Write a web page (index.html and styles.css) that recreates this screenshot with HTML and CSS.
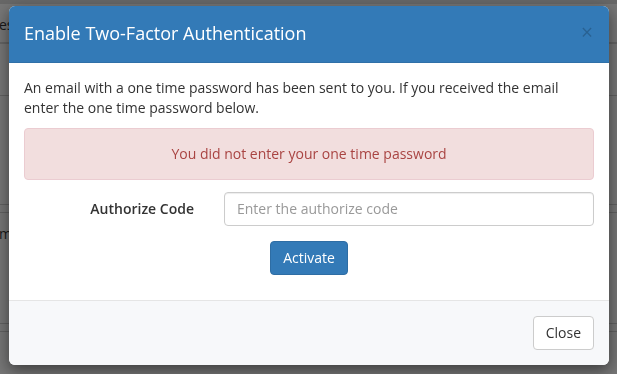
FILE: index.html
```html
<!DOCTYPE html>
<html lang="en">
<head>
  <meta charset="UTF-8">
  <title>Enable Two-Factor Authentication</title>
  <link rel="stylesheet" href="styles.css">
</head>
<body>
  <div class="page">
    <div class="page-top"></div>
    <div class="page-row row-a"><span class="row-text">es</span></div>
    <div class="page-row row-b"></div>
    <div class="page-row row-c"></div>
    <div class="page-row row-d"></div>
    <div class="page-row row-e"><span class="row-text">mi</span></div>
    <div class="page-row row-f"></div>
  </div>
  <div class="backdrop"></div>
  <div class="modal">
    <div class="modal-header">
      <h4 class="modal-title">Enable Two-Factor Authentication</h4>
      <button class="close" type="button">&times;</button>
    </div>
    <div class="modal-body">
      <p>An email with a one time password has been sent to you. If you received the email enter the one time password below.</p>
      <div class="alert">You did not enter your one time password</div>
      <div class="form-row">
        <label for="auth-code">Authorize Code</label>
        <input id="auth-code" type="text" placeholder="Enter the authorize code">
      </div>
      <div class="button-row">
        <button class="btn btn-primary" type="button">Activate</button>
      </div>
    </div>
    <div class="modal-footer">
      <button class="btn btn-default" type="button">Close</button>
    </div>
  </div>
</body>
</html>
```

FILE: styles.css
```css
html, body {
  margin: 0;
  height: 100%;
}
body {
  font-family: 'Open Sans', 'Liberation Sans', Arial, sans-serif;
  font-size: 14px;
  line-height: 20px;
  color: #333;
  background: #ececec;
  overflow: hidden;
}
.page {
  display: flex;
  flex-direction: column;
}
.page-top {
  height: 4px;
  background: #cfcfcf;
}
.page-row {
  border-bottom: 1px solid #c2c2c2;
  box-sizing: border-box;
}
.row-text {
  display: block;
  color: #333;
  margin-left: -1px;
}
.row-a {
  height: 40px;
  padding-top: 11px;
  border-bottom: 2px solid #c8c8c8;
}
.row-b {
  height: 52px;
}
.row-c {
  height: 109px;
}
.row-d {
  height: 8px;
}
.row-e {
  height: 111px;
  padding-top: 11px;
}
.row-f {
  height: 8px;
}
.backdrop {
  position: fixed;
  inset: 0;
  background: rgba(0, 0, 0, 0.5);
}
.modal {
  position: fixed;
  left: 9px;
  top: 6px;
  width: 600px;
  background: #fff;
  border-radius: 6px;
  overflow: hidden;
  box-shadow: 0 5px 15px rgba(0, 0, 0, 0.5);
}
.modal-header {
  display: flex;
  justify-content: space-between;
  align-items: flex-start;
  padding: 15px;
  background: #337ab7;
  border-bottom: 1px solid #2f70a8;
}
.modal-title {
  margin: 0;
  font-size: 18px;
  font-weight: 400;
  line-height: 25.7px;
  color: #fff;
}
.close {
  padding: 0;
  margin-top: 1px;
  margin-right: 1px;
  background: none;
  border: none;
  font-family: inherit;
  font-size: 21px;
  font-weight: 400;
  line-height: 1;
  color: #000;
  opacity: 0.2;
}
.modal-body {
  padding: 15px;
}
.modal-body p {
  margin: 0 0 10px;
}
.alert {
  padding: 15px;
  margin-bottom: 12px;
  border: 1px solid #ebccd1;
  border-radius: 4px;
  background: #f2dede;
  color: #a94442;
  text-align: center;
}
.form-row {
  display: flex;
  align-items: center;
  gap: 30px;
}
.form-row label {
  width: 170px;
  text-align: right;
  font-weight: 600;
}
.form-row input {
  flex: 1;
  height: 34px;
  box-sizing: border-box;
  padding: 6px 12px;
  border: 1px solid #ccc;
  border-radius: 4px;
  font-family: inherit;
  font-size: 14px;
  color: #555;
  box-shadow: inset 0 1px 1px rgba(0, 0, 0, 0.075);
}
.form-row input::placeholder {
  color: #999;
}
.button-row {
  text-align: center;
  margin-top: 15px;
  margin-bottom: 10px;
}
.btn {
  height: 34px;
  padding: 6px 12px;
  border: 1px solid transparent;
  border-radius: 4px;
  font-family: inherit;
  font-size: 14px;
  line-height: 20px;
  cursor: pointer;
}
.btn-primary {
  background: #337ab7;
  border-color: #2e6da4;
  color: #fff;
}
.btn-default {
  background: #fff;
  border-color: #ccc;
  color: #333;
}
.modal-footer {
  padding: 15px;
  text-align: right;
  background: #f7f8fa;
  border-top: 1px solid #e5e5e5;
}
```
